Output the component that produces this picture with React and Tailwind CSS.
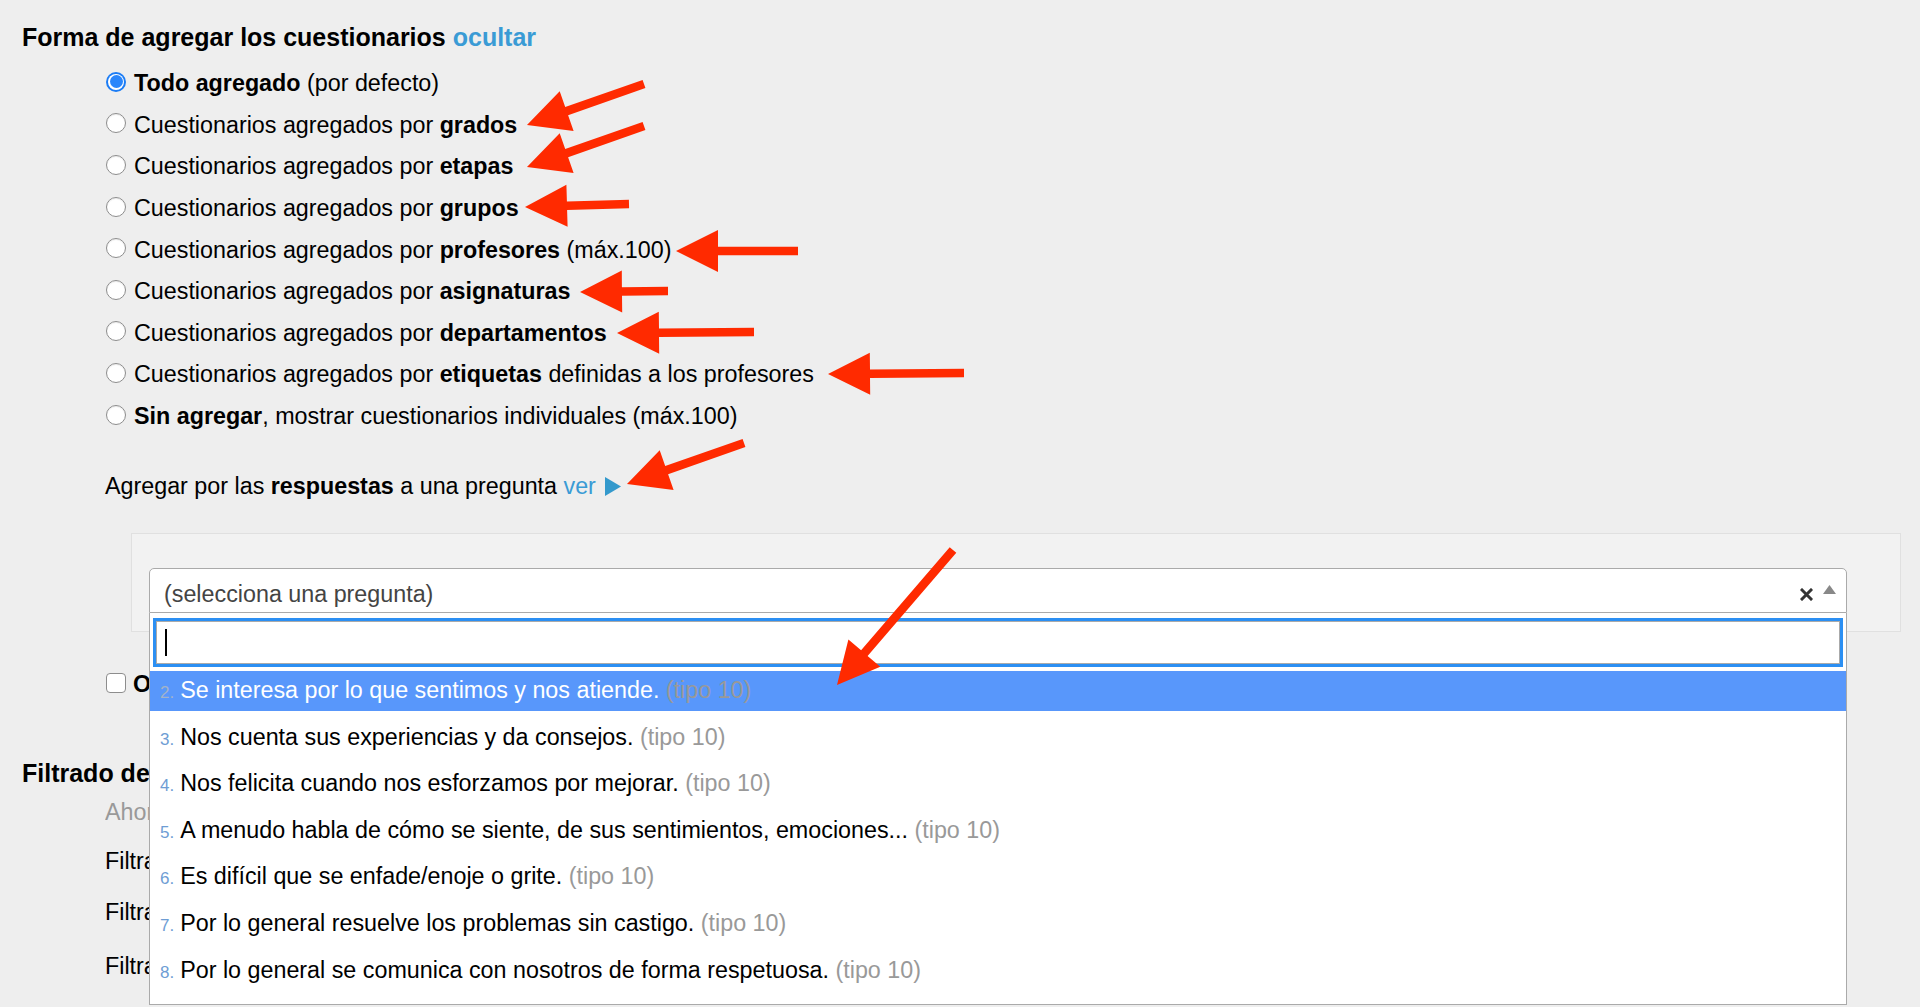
import React from "react";

function Radio({ checked }) {
  if (checked) {
    return (
      <span className="flex h-[20px] w-[20px] shrink-0 items-center justify-center rounded-full bg-[#1b7cf5] p-[2px]">
        <span className="flex h-full w-full items-center justify-center rounded-full bg-white p-[1.5px]">
          <span className="h-full w-full rounded-full bg-[#2a86fb]" />
        </span>
      </span>
    );
  }
  return (
    <span className="h-[20px] w-[20px] shrink-0 rounded-full border border-[#8d8d8d] bg-white shadow-[inset_0_1px_1px_rgba(0,0,0,0.08)]" />
  );
}

function Arrow({ x1, y1, x2, y2 }) {
  const dx = x2 - x1;
  const dy = y2 - y1;
  const len = Math.sqrt(dx * dx + dy * dy);
  const ux = dx / len;
  const uy = dy / len;
  const px = -uy;
  const py = ux;
  const head = 42;
  const hw = 21;
  const sw = 4.3;
  const bx = x2 - ux * head;
  const by = y2 - uy * head;
  const pts = [
    [x1 + px * sw, y1 + py * sw],
    [bx + px * sw, by + py * sw],
    [bx + px * hw, by + py * hw],
    [x2, y2],
    [bx - px * hw, by - py * hw],
    [bx - px * sw, by - py * sw],
    [x1 - px * sw, y1 - py * sw],
  ]
    .map((p) => p[0].toFixed(1) + "," + p[1].toFixed(1))
    .join(" ");
  return <polygon points={pts} fill="#ff2a00" />;
}

const options = [
  { pre: "Todo agregado", bold: true, rest: " (por defecto)", checked: true },
  { pre: "Cuestionarios agregados por ", b: "grados" },
  { pre: "Cuestionarios agregados por ", b: "etapas" },
  { pre: "Cuestionarios agregados por ", b: "grupos" },
  { pre: "Cuestionarios agregados por ", b: "profesores", rest: " (máx.100)" },
  { pre: "Cuestionarios agregados por ", b: "asignaturas" },
  { pre: "Cuestionarios agregados por ", b: "departamentos" },
  { pre: "Cuestionarios agregados por ", b: "etiquetas", rest: " definidas a los profesores" },
  { pre: "Sin agregar", bold: true, rest: ", mostrar cuestionarios individuales (máx.100)" },
];

const questions = [
  { n: "2.", t: "Se interesa por lo que sentimos y nos atiende." },
  { n: "3.", t: "Nos cuenta sus experiencias y da consejos." },
  { n: "4.", t: "Nos felicita cuando nos esforzamos por mejorar." },
  { n: "5.", t: "A menudo habla de cómo se siente, de sus sentimientos, emociones..." },
  { n: "6.", t: "Es difícil que se enfade/enoje o grite." },
  { n: "7.", t: "Por lo general resuelve los problemas sin castigo." },
  { n: "8.", t: "Por lo general se comunica con nosotros de forma respetuosa." },
];

const arrows = [
  [644, 84, 527, 125],
  [644, 126, 527, 167],
  [629, 204, 525, 207],
  [798, 251, 676, 251],
  [668, 291, 580, 292],
  [754, 332, 617, 333],
  [964, 373, 828, 374],
  [744, 443, 627, 484],
  [953, 550, 837, 685],
];

export default function App() {
  return (
    <div className="relative h-[1007px] w-full overflow-hidden bg-[#eeeeee] font-['Liberation_Sans',Arial,sans-serif] text-[23.3px] text-black">
      <div className="flex flex-col pl-[22px] pt-[22px]">
        <div className="flex h-[30px] items-center text-[25px] font-bold leading-none">
          <span className="pt-[1px]">Forma de agregar los cuestionarios&nbsp;</span>
          <span className="pt-[1px] text-[#3a9bd5]">ocultar</span>
        </div>

        <div className="ml-[84px] mt-[9px] flex flex-col">
          {options.map((o, i) => (
            <div key={i} className="flex h-[41.6px] items-center gap-[8px] whitespace-pre leading-none">
              <Radio checked={o.checked} />
              <span className="pt-[4px]">
                {o.bold ? <b>{o.pre}</b> : o.pre}
                {o.b && <b>{o.b}</b>}
                {o.rest}
              </span>
            </div>
          ))}
        </div>

        <div className="ml-[83px] mt-[30px] flex h-[40px] items-center whitespace-pre leading-none">
          <span className="pt-[3px]">
            Agregar por las <b>respuestas</b> a una pregunta <span className="text-[#3a9bd5]">ver</span>{" "}
          </span>
          <svg width="16" height="19" viewBox="0 0 16 19" className="ml-[3px] mt-[2px]">
            <polygon points="0,0 16,9.5 0,19" fill="#3399cc" />
          </svg>
        </div>

        <div className="ml-[109px] mt-[28px] w-[1770px] border border-[#e0e0e0] bg-[#f2f2f2] pb-[18px] pl-[17px] pt-[34px]">
          <div className="relative w-[1698px]">
            <div className="flex h-[45px] items-center rounded-t-[5px] border border-[#aaaaaa] bg-white pl-[14px] pr-[10px] leading-none">
              <span className="flex-1 pt-[8px] text-[#444444]">(selecciona una pregunta)</span>
              <svg width="13" height="13" viewBox="0 0 13 13" className="mr-[10px] mt-[7px]">
                <path d="M2 2 L11 11 M11 2 L2 11" stroke="#333" strokeWidth="3" strokeLinecap="square" />
              </svg>
              <svg width="13" height="9" viewBox="0 0 13 9" className="mb-[2px]">
                <polygon points="0,9 6.5,0 13,9" fill="#888888" />
              </svg>
            </div>

            <div className="absolute left-0 right-0 top-full z-10 flex h-[392px] flex-col border-x border-b border-[#aaaaaa] bg-white">
              <div className="mx-[3px] mt-[5px] h-[49px] border-[3px] border-[#2b8ff3]">
                <div className="flex h-full items-center border border-[#aaaaaa] bg-white pl-[8px]">
                  <span className="h-[27px] w-[2px] bg-black" />
                </div>
              </div>
              <div className="mt-[3.7px] flex flex-col gap-[6.6px]">
                {questions.map((q, i) => (
                  <div
                    key={i}
                    className={
                      i === 0
                        ? "flex h-[40px] items-baseline whitespace-pre bg-[#5897fb] pl-[10px] leading-[38px] text-white"
                        : "flex h-[40px] items-baseline whitespace-pre pl-[10px] leading-[38px] text-black"
                    }
                  >
                    <span className={i === 0 ? "mr-[6px] text-[17px] text-[#a3b3c9]" : "mr-[6px] text-[17px] text-[#6e9dd4]"}>
                      {q.n}
                    </span>
                    <span>
                      {q.t} <span className="text-[#999999]">(tipo 10)</span>
                    </span>
                  </div>
                ))}
              </div>
            </div>
          </div>
        </div>

        <div className="ml-[84px] mt-[31px] flex h-[40px] items-center gap-[7px] leading-none">
          <span className="h-[20px] w-[20px] shrink-0 rounded-[4px] border border-[#8d8d8d] bg-white" />
          <b className="w-[16px] overflow-hidden whitespace-nowrap pt-[3px]">Ocultar</b>
        </div>

        <div className="mt-[54px] flex h-[30px] w-[127px] items-center overflow-hidden whitespace-nowrap pt-[2px] text-[25px] font-bold leading-none">
          Filtrado de cuestionarios
        </div>
        <div className="ml-[83px] mt-[6px] flex h-[36px] w-[44px] items-center overflow-hidden whitespace-nowrap pt-[2px] leading-none text-[#999999]">
          Ahora
        </div>
        <div className="ml-[83px] mt-[11px] flex h-[40px] w-[44px] items-center overflow-hidden whitespace-nowrap pt-[2px] leading-none">Filtrar</div>
        <div className="ml-[83px] mt-[11px] flex h-[40px] w-[44px] items-center overflow-hidden whitespace-nowrap pt-[2px] leading-none">Filtrar</div>
        <div className="ml-[83px] mt-[14px] flex h-[40px] w-[44px] items-center overflow-hidden whitespace-nowrap pt-[2px] leading-none">Filtrar</div>
      </div>

      <svg className="pointer-events-none absolute left-0 top-0 z-20" width="1920" height="1007" viewBox="0 0 1920 1007">
        {arrows.map((a, i) => (
          <Arrow key={i} x1={a[0]} y1={a[1]} x2={a[2]} y2={a[3]} />
        ))}
      </svg>
    </div>
  );
}
